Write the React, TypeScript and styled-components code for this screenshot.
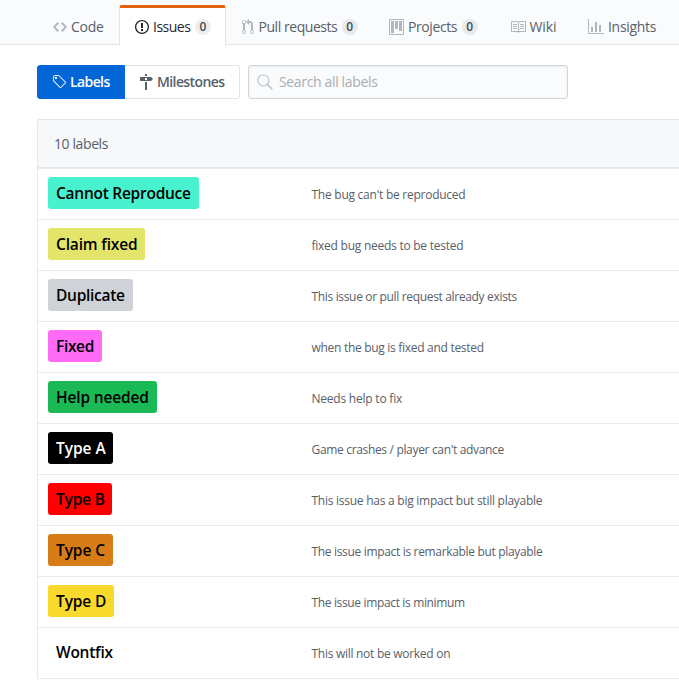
import React from "react";
import styled, { createGlobalStyle } from "styled-components";

const GlobalStyle = createGlobalStyle`
  *, *::before, *::after { box-sizing: border-box; }
  body {
    margin: 0;
    background: #fff;
    color: #24292e;
    font-family: "Open Sans", "Noto Sans", sans-serif;
    font-size: 14px;
    line-height: 20px;
    overflow: hidden;
  }
`;

const Page = styled.div`
  width: 679px;
  height: 700px;
  overflow: hidden;
`;

const TabBar = styled.nav`
  display: flex;
  align-items: flex-end;
  height: 45px;
  padding-left: 37px;
  background: #fafbfc;
  border-bottom: 1px solid #e1e4e8;
`;

const Tab = styled.a<{ $width: number; $active?: boolean }>`
  flex: none;
  display: flex;
  align-items: center;
  width: ${(p) => p.$width}px;
  height: 40px;
  margin-bottom: -1px;
  padding: 0 0 0 15px;
  border: solid transparent;
  border-width: 3px 1px 0;
  border-radius: 3px 3px 0 0;
  color: ${(p) => (p.$active ? "#24292e" : "#586069")};
  background: ${(p) => (p.$active ? "#fff" : "transparent")};
  border-color: ${(p) => (p.$active ? "#e36209 #e1e4e8 transparent" : "transparent")};

  svg { color: ${(p) => (p.$active ? "#24292e" : "#b4b7ba")}; }
`;

const Text = styled.span<{ $spacing?: number }>`
  white-space: nowrap;
  letter-spacing: ${(p) => p.$spacing ?? 0}px;
`;

const Glyph = styled.svg<{ $gap: number }>`
  flex: none;
  display: block;
  margin-right: ${(p) => p.$gap}px;
  fill: currentColor;
`;

const Counter = styled.span`
  display: grid;
  place-items: center;
  width: 16px;
  height: 16px;
  margin-left: 4.5px;
  border-radius: 8px;
  background: rgba(27, 31, 35, 0.08);
  color: #444d56;
  font-size: 12px;
  font-weight: 600;
  line-height: 16px;
`;

const Toolbar = styled.div`
  display: flex;
  height: 34px;
  margin: 20px 0 20px 37px;
`;

const SegmentButton = styled.a<{ $width: number; $selected?: boolean }>`
  display: flex;
  align-items: center;
  width: ${(p) => p.$width}px;
  padding-left: 14px;
  font-weight: 600;
  color: ${(p) => (p.$selected ? "#fff" : "#586069")};
  background: ${(p) => (p.$selected ? "#0366d6" : "#fff")};
  border: 1px solid ${(p) => (p.$selected ? "#0366d6" : "#e1e4e8")};
  border-left-width: ${(p) => (p.$selected ? 1 : 0)}px;
  border-radius: ${(p) => (p.$selected ? "3px 0 0 3px" : "0 3px 3px 0")};
`;

const SearchField = styled.label`
  display: flex;
  align-items: center;
  width: 320px;
  margin-left: 8px;
  padding-left: 8px;
  border: 1px solid #d1d5da;
  border-radius: 3px;
  background: #fafbfc;
  box-shadow: inset 0 1px 2px rgba(27, 31, 35, 0.075);
  color: #a9adb2;

  svg { color: #c6cbd1; }
`;

const LabelTable = styled.section`
  margin-left: 37px;
  border: 1px solid #e1e4e8;
  border-color: #e1e4e8 transparent #e8eaec #e6e8eb;
  border-right: 0;
  border-radius: 3px 0 0 0;
`;

const TableHeader = styled.header`
  display: flex;
  align-items: center;
  height: 48px;
  padding-left: 16px;
  color: #586069;
  background: #f6f8fa;
  border-bottom: 1px solid #e1e4e8;
  border-radius: 2px 0 0 0;
`;

const LabelRow = styled.div`
  display: grid;
  grid-template-columns: 263px 1fr;
  align-items: start;
  height: 51px;
  padding: 8px 0 0 10px;
  border-top: 1px solid #e8eaec;
`;

const LabelChip = styled.a<{ $width: number; $bg: string; $fg: string; $spacing: number }>`
  display: block;
  width: ${(p) => p.$width}px;
  height: 32px;
  padding-left: 8px;
  border-radius: 3px;
  background: ${(p) => p.$bg};
  color: ${(p) => p.$fg};
  font-size: 15.5px;
  font-weight: 600;
  line-height: 33px;
  letter-spacing: ${(p) => p.$spacing}px;
  white-space: nowrap;
`;

const Description = styled.span<{ $spacing: number }>`
  padding: 8px 0 0 0.5px;
  font-size: 12px;
  line-height: 20px;
  color: #586069;
  letter-spacing: ${(p) => p.$spacing}px;
  white-space: nowrap;
`;

const icons = {
  code: { w: 14, d: "M9.5 3L8 4.5 11.5 8 8 11.5 9.5 13 14 8 9.5 3zm-5 0L0 8l4.5 5L6 11.5 2.5 8 6 4.5 4.5 3z" },
  issue: { w: 14, d: "M7 2.3c3.14 0 5.7 2.56 5.7 5.7s-2.56 5.7-5.7 5.7A5.71 5.71 0 0 1 1.3 8c0-3.14 2.56-5.7 5.7-5.7zM7 1C3.14 1 0 4.14 0 8s3.14 7 7 7 7-3.14 7-7-3.14-7-7-7zm1 3H6v5h2V4zm0 6H6v2h2v-2z" },
  pull: { w: 12, d: "M11 11.28V5c-.03-.78-.34-1.47-.94-2.06C9.46 2.35 8.78 2.03 8 2H7V0L4 3l3 3V4h1c.27.02.48.11.69.31.21.2.3.42.31.69v6.28A1.993 1.993 0 0 0 10 15a1.993 1.993 0 0 0 1-3.72zm-1 2.92c-.66 0-1.2-.55-1.2-1.2 0-.65.55-1.2 1.2-1.2.65 0 1.2.55 1.2 1.2 0 .65-.55 1.2-1.2 1.2zM4 3c0-1.11-.89-2-2-2a1.993 1.993 0 0 0-1 3.72v6.56A1.993 1.993 0 0 0 2 15a1.993 1.993 0 0 0 1-3.72V4.72c.59-.34 1-.98 1-1.72zm-.8 10c0 .66-.55 1.2-1.2 1.2-.65 0-1.2-.55-1.2-1.2 0-.65.55-1.2 1.2-1.2.65 0 1.2.55 1.2 1.2zM2 4.2C1.34 4.2.8 3.65.8 3c0-.65.55-1.2 1.2-1.2.65 0 1.2.55 1.2 1.2 0 .65-.55 1.2-1.2 1.2z" },
  project: { w: 15, d: "M10 12h3V2h-3v10zm-4-2h3V2H6v8zm-4 4h3V2H2v12zm-1 1h13V1H1v14zM14 0H1a1 1 0 0 0-1 1v14a1 1 0 0 0 1 1h13a1 1 0 0 0 1-1V1a1 1 0 0 0-1-1z" },
  book: { w: 16, d: "M3 5h4v1H3V5zm0 3h4V7H3v1zm0 2h4V9H3v1zm11-5h-4v1h4V5zm0 2h-4v1h4V7zm0 2h-4v1h4V9zm2-6v9c0 .55-.45 1-1 1H9.5l-1 1-1-1H2c-.55 0-1-.45-1-1V3c0-.55.45-1 1-1h5.5l1 1 1-1H15c.55 0 1 .45 1 1zm-8 .5L7.5 3H2v9h6V3.5zm7-.5H9.5l-.5.5V12h6V3z" },
  graph: { w: 16, d: "M16 14v1H0V0h1v14h15zM5 13H3V8h2v5zm4 0H7V3h2v10zm4 0h-2V6h2v7z" },
  tag: { w: 14, d: "M7.685 1.72a2.49 2.49 0 0 0-1.76-.726H3.48A2.5 2.5 0 0 0 .994 3.48v2.456c0 .656.269 1.292.726 1.76l6.024 6.024a.99.99 0 0 0 1.402 0l4.563-4.563a.99.99 0 0 0 0-1.402L7.685 1.72zM2.366 7.048a1.54 1.54 0 0 1-.467-1.123V3.48c0-.874.716-1.58 1.58-1.58h2.456c.418 0 .825.159 1.123.467l6.104 6.094-4.702 4.702-6.094-6.114zm.626-4.066h1.989v1.989H2.982V2.982z" },
  milestone: { w: 14, d: "M8 2H6V0h2v2zm4 5H2c-.55 0-1-.45-1-1V4c0-.55.45-1 1-1h10l2 2-2 2zM8 4H6v2h2V4zM6 16h2V8H6v8z" },
};

type IconName = keyof typeof icons;

function Icon({ name, gap = 4 }: { name: IconName; gap?: number }) {
  const { w, d } = icons[name];
  return (
    <Glyph $gap={gap} width={w} height={16} viewBox={`0 0 ${w} 16`} aria-hidden>
      <path fillRule="evenodd" d={d} />
    </Glyph>
  );
}

interface TabItem {
  icon: IconName;
  text: string;
  width: number;
  spacing: number;
  gap?: number;
  count?: number;
  active?: boolean;
}

const tabs: TabItem[] = [
  { icon: "code", text: "Code", width: 82, spacing: -0.3 },
  { icon: "issue", text: "Issues", width: 107, spacing: -0.5, count: 0, active: true },
  { icon: "pull", text: "Pull requests", width: 147, spacing: -0.45, gap: 4.5, count: 0 },
  { icon: "project", text: "Projects", width: 121, spacing: -0.4, count: 0 },
  { icon: "book", text: "Wiki", width: 78, spacing: -0.1, gap: 3.5 },
  { icon: "graph", text: "Insights", width: 100, spacing: -0.3 },
];

const labels = [
  { name: "Cannot Reproduce", width: 151, bg: "#49f2ce", fg: "#000", ns: -0.26, text: "The bug can't be reproduced", ts: -0.255 },
  { name: "Claim fixed", width: 97, bg: "#e2e569", fg: "#000", ns: -0.17, text: "fixed bug needs to be tested", ts: -0.25 },
  { name: "Duplicate", width: 85, bg: "#cfd3d7", fg: "#000", ns: -0.29, text: "This issue or pull request already exists", ts: -0.335 },
  { name: "Fixed", width: 54, bg: "#ff6bf5", fg: "#000", ns: -0.35, text: "when the bug is fixed and tested", ts: -0.295 },
  { name: "Help needed", width: 109, bg: "#1bb955", fg: "#000", ns: -0.16, text: "Needs help to fix", ts: -0.22 },
  { name: "Type A", width: 65, bg: "#000", fg: "#fff", ns: -0.05, text: "Game crashes / player can't advance", ts: -0.33 },
  { name: "Type B", width: 64, bg: "#ff0000", fg: "#000", ns: -0.2, text: "This issue has a big impact but still playable", ts: -0.255 },
  { name: "Type C", width: 65, bg: "#d87c18", fg: "#000", ns: -0.1, text: "The issue impact is remarkable but playable", ts: -0.33 },
  { name: "Type D", width: 66, bg: "#f9d92c", fg: "#000", ns: -0.13, text: "The issue impact is minimum", ts: -0.35 },
  { name: "Wontfix", width: 74, bg: "#fff", fg: "#000", ns: -0.26, text: "This will not be worked on", ts: -0.28 },
];

export default function App() {
  return (
    <Page>
      <GlobalStyle />
      <TabBar>
        {tabs.map((t) => (
          <Tab key={t.text} $width={t.width} $active={t.active}>
            <Icon name={t.icon} gap={t.gap} />
            <Text $spacing={t.spacing}>{t.text}</Text>
            {t.count !== undefined && <Counter>{t.count}</Counter>}
          </Tab>
        ))}
      </TabBar>
      <Toolbar>
        <SegmentButton $width={88} $selected>
          <Icon name="tag" gap={4} />
          <Text $spacing={-0.6}>Labels</Text>
        </SegmentButton>
        <SegmentButton $width={115}>
          <Icon name="milestone" gap={4} />
          <Text $spacing={-0.6}>Milestones</Text>
        </SegmentButton>
        <SearchField>
          <Glyph $gap={6} width={16} height={16} viewBox="0 0 16 16" aria-hidden>
            <circle cx="6.4" cy="6.4" r="5.5" fill="none" stroke="currentColor" strokeWidth="1.4" />
            <path d="M10.4 10.4l4.2 4.2" fill="none" stroke="currentColor" strokeWidth="2" strokeLinecap="round" />
          </Glyph>
          <Text $spacing={-0.35}>Search all labels</Text>
        </SearchField>
      </Toolbar>
      <LabelTable>
        <TableHeader>
          <Text $spacing={-0.4}>10 labels</Text>
        </TableHeader>
        {labels.map((l) => (
          <LabelRow key={l.name}>
            <LabelChip $width={l.width} $bg={l.bg} $fg={l.fg} $spacing={l.ns}>
              {l.name}
            </LabelChip>
            <Description $spacing={l.ts}>{l.text}</Description>
          </LabelRow>
        ))}
      </LabelTable>
    </Page>
  );
}
